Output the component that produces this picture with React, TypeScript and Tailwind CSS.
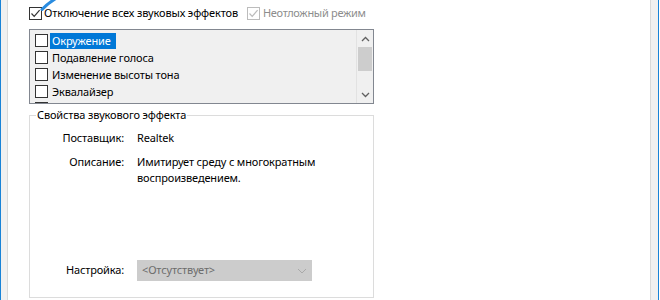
import React from "react";

const font = { fontFamily: '"Segoe UI", "Noto Sans", "Open Sans", sans-serif' };

function Check({ checked, disabled }: { checked?: boolean; disabled?: boolean }) {
  const c = disabled ? "#bcbcbc" : "#333333";
  return (
    <div
      className={`w-[13px] h-[13px] shrink-0 border flex items-center justify-center bg-white ${disabled ? "border-[#bcbcbc]" : "border-[#333333]"}`}
    >
      {checked && (
        <svg width="11" height="11" viewBox="0 0 11 11">
          <path d="M1.5 5.5 L4.2 8.3 L9.6 2.2" fill="none" stroke={c} strokeWidth="1.2" />
        </svg>
      )}
    </div>
  );
}

function ListRow({ label, selected }: { label: string; selected?: boolean }) {
  return (
    <div className="h-[17px] flex items-center pl-[5px] gap-[2px] shrink-0 whitespace-nowrap">
      <Check />
      {label && (
        <span
          className={`h-[16px] leading-[16px] px-[2px] ${selected ? "bg-[#0078d7] text-white pr-[5px]" : "text-black"}`}
        >
          {label}
        </span>
      )}
    </div>
  );
}

export default function App() {
  return (
    <div
      className="w-[660px] h-[300px] flex bg-white overflow-hidden text-[11px] tracking-[-0.15px] text-black whitespace-nowrap"
      style={font}
    >
      <div className="w-[1px] bg-[#1883d7]" />
      <div className="w-[6px] bg-[#f0f0f0]" />
      <div className="w-[644px] bg-white border-x border-[#d9d9d9] relative">
        <svg className="absolute left-[28px] top-0" width="24" height="12" viewBox="0 0 24 12">
          <path d="M6 9.5 Q11 4 19 -1" fill="none" stroke="#2a8ce0" strokeWidth="3" strokeLinecap="round" />
        </svg>
        <div className="pt-[5px] pl-[21px] w-[366px] flex flex-col">
          <div className="h-[16px] flex items-center">
            <Check checked />
            <span className="ml-[2px] leading-[16px]">Отключение всех звуковых эффектов</span>
            <div className="ml-[9px]">
              <Check checked disabled />
            </div>
            <span className="ml-[3px] leading-[16px] tracking-[-0.3px] text-[#8d8d8d]">Неотложный режим</span>
          </div>
          <div className="mt-[8px] h-[75px] border border-[#828790] bg-[#f0f0f0] flex">
            <div className="flex-1 pt-[2px] flex flex-col overflow-hidden">
              <ListRow label="Окружение" selected />
              <ListRow label="Подавление голоса" />
              <ListRow label="Изменение высоты тона" />
              <ListRow label="Эквалайзер" />
              <ListRow label="" />
            </div>
            <div className="w-[17px] border-l border-[#e2e2e2] bg-[#f0f0f0] flex flex-col items-center">
              <div className="h-[17px] flex items-center justify-center">
                <svg width="9" height="6" viewBox="0 0 9 6">
                  <path d="M1 5 L4.5 1.5 L8 5" fill="none" stroke="#606060" strokeWidth="1.3" />
                </svg>
              </div>
              <div className="w-[14px] h-[24px] bg-[#cdcdcd]" />
              <div className="flex-1" />
              <div className="h-[17px] flex items-center justify-center">
                <svg width="9" height="6" viewBox="0 0 9 6">
                  <path d="M1 1 L4.5 4.5 L8 1" fill="none" stroke="#606060" strokeWidth="1.3" />
                </svg>
              </div>
            </div>
          </div>
          <fieldset className="mt-[3px] h-[191px] border border-[#dcdcdc] px-0">
            <legend className="ml-[6px] px-[1px] leading-[16px]">Свойства звукового эффекта</legend>
            <div className="flex flex-col pt-[7px]">
              <div className="flex h-[16px] leading-[16px]">
                <div className="w-[94px] text-right">Поставщик:</div>
                <div className="ml-[13px]">Realtek</div>
              </div>
              <div className="flex mt-[8px] leading-[16px]">
                <div className="w-[94px] text-right">Описание:</div>
                <div className="ml-[13px]">
                  <div>Имитирует среду с многократным</div>
                  <div>воспроизведением.</div>
                </div>
              </div>
              <div className="flex items-center mt-[74px]">
                <div className="w-[94px] text-right">Настройка:</div>
                <div className="ml-[13px] w-[175px] h-[21px] bg-[#cccccc] border border-[#cccccc] flex items-center justify-between pl-[4px] pr-[4px] text-[#6d6d6d]">
                  <span>&lt;Отсутствует&gt;</span>
                  <svg width="10" height="6" viewBox="0 0 10 6">
                    <path d="M1 1 L5 5 L9 1" fill="none" stroke="#a9a9a9" strokeWidth="1" />
                  </svg>
                </div>
              </div>
            </div>
          </fieldset>
        </div>
      </div>
      <div className="w-[7px] bg-[#f0f0f0]" />
      <div className="w-[1px] bg-[#1883d7]" />
      <div className="w-[1px] bg-white" />
    </div>
  );
}
